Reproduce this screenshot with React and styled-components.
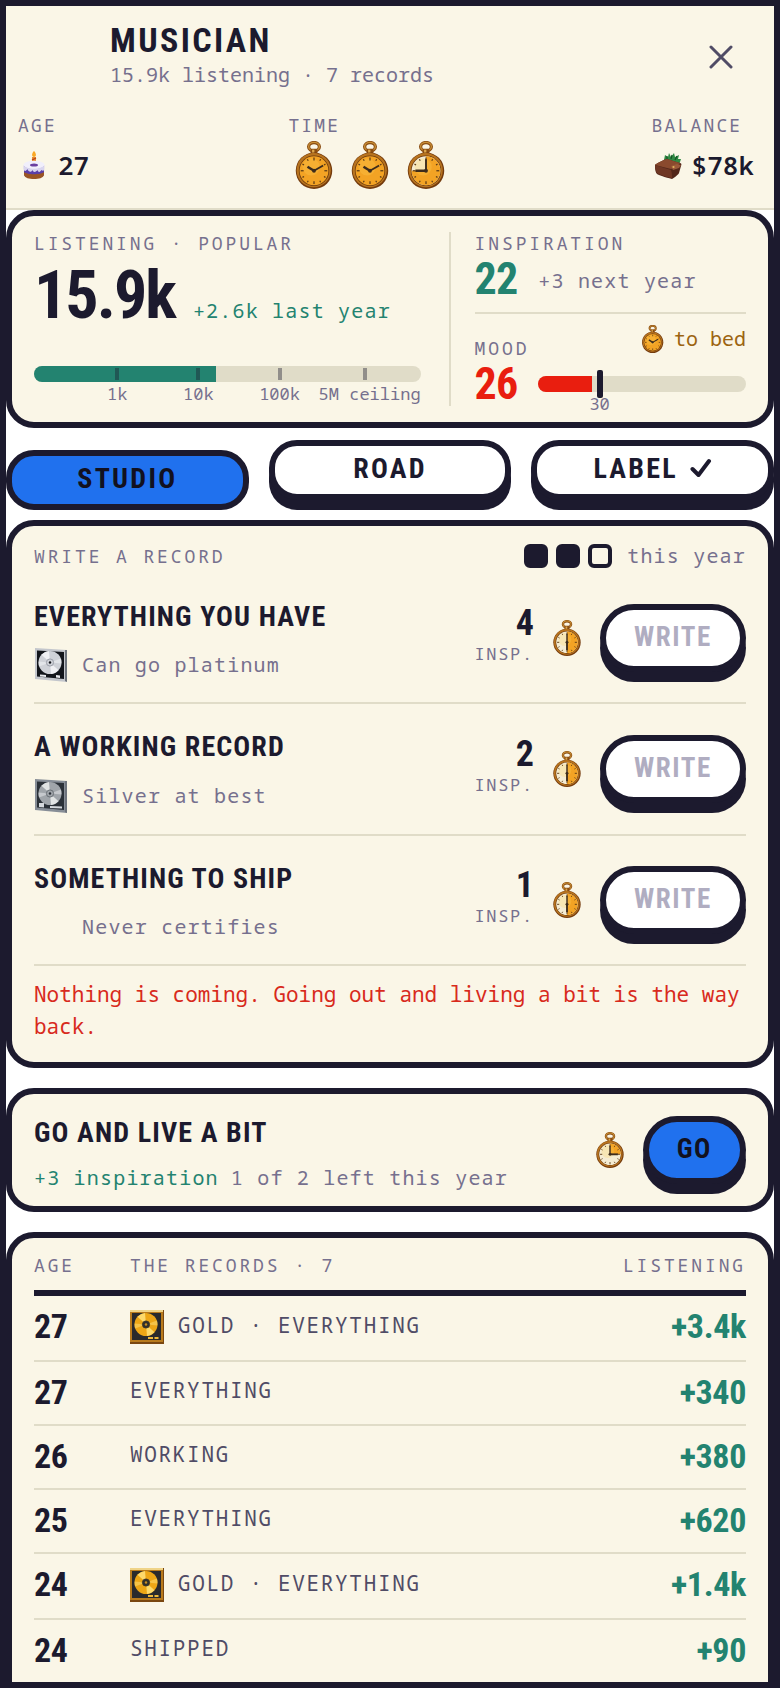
import React from "react";
import styled, { createGlobalStyle } from "styled-components";

const COLORS = {
  ink: "#1c1a2e",
  night: "#121120",
  cream: "#faf6e7",
  sand: "#e0dcc8",
  white: "#ffffff",
  blue: "#2071ee",
  green: "#238370",
  red: "#e91e0f",
  alert: "#d82a1c",
  amber: "#9c6410",
  muted: "#76708e",
  slate: "#504c66",
  disabled: "#b0adc1",
};

const MONO = `"Noto Sans Mono", "DejaVu Sans Mono", monospace`;
const DISPLAY = `"Roboto Condensed", "Roboto", sans-serif`;

const Watches = [
  { id: 1, filled: 1 },
  { id: 2, filled: 1 },
  { id: 3, filled: 0.75 },
];

const Milestones = [
  { name: "1k", at: 21 },
  { name: "10k", at: 42 },
  { name: "100k", at: 63 },
  { name: "5M ceiling", at: 85, last: true },
];

const Slots = [true, true, false];

const Projects = [
  { name: "Everything you have", hint: "Can go platinum", cost: 4, medal: "platinum" },
  { name: "A working record", hint: "Silver at best", cost: 2, medal: "silver" },
  { name: "Something to ship", hint: "Never certifies", cost: 1 },
];

const Records = [
  { age: 27, name: "Gold · Everything", gain: "+3.4k", gold: true },
  { age: 27, name: "Everything", gain: "+340" },
  { age: 26, name: "Working", gain: "+380" },
  { age: 25, name: "Everything", gain: "+620" },
  { age: 24, name: "Gold · Everything", gain: "+1.4k", gold: true },
  { age: 24, name: "Shipped", gain: "+90" },
];

const onCircle = (angle, r) => {
  const a = (angle * Math.PI) / 180;
  return [20 + r * Math.sin(a), 31 - r * Math.cos(a)];
};

// filled: share of the dial, clockwise from twelve, still available
function Stopwatch({ size = 48, filled = 1 }) {
  const [ex, ey] = onCircle(filled * 360, 15);
  const [mx, my] = filled === 1 ? onCircle(60, 11) : onCircle(0, 12);
  const [hx, hy] = filled === 1 ? onCircle(302, 8) : onCircle(filled * 360, 11);
  return (
    <svg width={(size * 5) / 6} height={size} viewBox="0 0 40 50" aria-hidden="true">
      <ellipse cx="20" cy="6" rx="5.6" ry="4.4" fill="none" stroke="#8a4d12" strokeWidth="3.4" />
      <ellipse cx="20" cy="5.8" rx="5.6" ry="4.4" fill="none" stroke="#c98f36" strokeWidth="1.4" />
      <rect x="16.5" y="8" width="7" height="6" rx="1" fill="#8a4d12" />
      <rect x="18" y="9" width="2.4" height="4" fill="#dca64a" />
      <circle cx="20" cy="31" r="19" fill="#743b0d" />
      <circle cx="19.7" cy="30.4" r="17.8" fill="#b8741f" />
      <circle cx="20" cy="31" r="15.8" fill="#6b390e" />
      <circle cx="20" cy="31" r="15" fill={filled === 1 ? "#f3a324" : "#f5ecd2"} />
      {filled < 1 && (
        <path
          d={`M20 31V16A15 15 0 ${filled > 0.5 ? 1 : 0} 1 ${ex} ${ey}Z`}
          fill="#f3a324"
        />
      )}
      <circle cx="17" cy="27" r="9" fill="#ffd35c" opacity="0.25" />
      {[0, 30, 60, 90, 120, 150, 180, 210, 240, 270, 300, 330].map((a) => {
        const [x1, y1] = onCircle(a, 13.8);
        const [x2, y2] = onCircle(a, a % 90 === 0 ? 10.8 : 12);
        return (
          <line key={a} x1={x1} y1={y1} x2={x2} y2={y2} stroke="#5b3a16" strokeWidth="1.3" />
        );
      })}
      <line x1="20" y1="31" x2={mx} y2={my} stroke="#3d2c1c" strokeWidth="2" />
      <line x1="20" y1="31" x2={hx} y2={hy} stroke="#3d2c1c" strokeWidth="2.6" />
      <circle cx="20" cy="31" r="2" fill="#3d2c1c" />
    </svg>
  );
}

function Cake() {
  return (
    <svg width="32" height="32" viewBox="0 0 32 32" aria-hidden="true">
      <rect x="14" y="8" width="4" height="10" fill="#e8892b" />
      <path d="M14 11l4-2M14 15l4-2" stroke="#b8431c" strokeWidth="1.2" />
      <path d="M16 2c3 3 2 6 0 6s-3-3 0-6z" fill="#f9a825" />
      <path d="M6 17v8c0 3 4 4 10 4s10-1 10-4v-8z" fill="#5a3fa8" />
      <path d="M6 23v3c1 3 5 4 10 4s9-1 10-4v-3c-3 3-17 3-20 0z" fill="#9a5524" />
      <ellipse cx="16" cy="16" rx="10.6" ry="4.2" fill="#f1effb" />
      <path
        d="M5.4 16v4c1 3 3 2 4 0 1 3 4 4 5 1 1 3 4 2 5 0 1 3 3 2 4 0 1 1 3 1 3-1v-4c-3 5-18 5-21 0z"
        fill="#d9d5ef"
      />
      <ellipse cx="16" cy="16" rx="4" ry="1.6" fill="#6a3fa0" />
    </svg>
  );
}

function Wallet() {
  return (
    <svg width="32" height="32" viewBox="0 0 32 32" aria-hidden="true">
      <path d="M12 11l1-5 3 2 1-4 2 4 3-4 1 4 4-2-1 4 3 0-2 6-8 2z" fill="#2f8a43" />
      <path d="M15 10l0-3M19 10l1-4M23 11l2-4" stroke="#155526" strokeWidth="1.2" />
      <path d="M3 16c0-1 10-6 12-6l13 4c1 0 2 1 1 3l-2 7c0 1-5 5-7 6-1 0-14-4-15-5-2-2-2-7-2-9z" fill="#52271a" />
      <path d="M3 16c0-1 10-6 12-6l13 4c0 1-7 6-9 6z" fill="#8a4a2e" />
      <path d="M3 16l16 5c1 3 1 6 1 8-3 0-14-4-15-5-1-1-2-6-2-8z" fill="#6f3724" />
      <path d="M19 17l6-2 4 1-2 3-6 2z" fill="#9a5a3a" />
      <circle cx="21.5" cy="18" r="1.1" fill="#e0b25a" />
    </svg>
  );
}

const MEDALS = {
  platinum: { frame: "#c3c6cc", back: "#12151b", disc: "#cfd2d8", shine: "#f6f7f9", hub: "#8f939e" },
  silver: { frame: "#878e97", back: "#2b3138", disc: "#a0a5aa", shine: "#eceeef", hub: "#5d6369" },
  gold: { frame: "#b87a1c", back: "#2a2a2c", disc: "#eda616", shine: "#ffe27a", hub: "#33302a" },
};

function Medal({ kind }) {
  const m = MEDALS[kind];
  return (
    <svg width="34" height="34" viewBox="0 0 34 34" aria-hidden="true">
      {kind === "gold" ? (
        <>
          <rect width="34" height="34" fill="#7a4710" />
          <rect width="33" height="32" fill={m.frame} />
          <rect width="33" height="2" fill="#f0d488" />
          <rect x="2" y="3" width="29" height="27" fill={m.back} />
        </>
      ) : (
        <>
          <path d="M1 0l32 2v32L1 31z" fill={m.frame} />
          <path d="M31 2l2 0v32l-2-1z" fill="#6d737c" />
          <path d="M3 2.5l27 1.5v27L3 28.5z" fill={m.back} />
        </>
      )}
      <circle cx="16" cy="14.5" r="11.5" fill={m.disc} />
      <path
        d="M16 14.5L7.5 6.8A11.5 11.5 0 0 1 15 3zM16 14.500L24.500 22.200A11.500 11.500 0 0 1 17 26z"
        fill={m.shine}
        opacity="0.85"
      />
      <path d="M16 14.5l11-4a11.5 11.5 0 0 1 .5 5zM16 14.5l-11 4a11.5 11.5 0 0 1-.5-5z" fill={m.shine} opacity="0.5" />
      <circle cx="16" cy="14.5" r="3.6" fill={kind === "gold" ? m.hub : m.disc} stroke={m.hub} strokeWidth="0.8" />
      <circle cx="16" cy="14.5" r="1.2" fill={kind === "gold" ? "#c98d20" : m.back} />
      {kind === "gold" && <path d="M18 27h5v2h-5zM24.5 27h4v2h-4z" fill="#f0b93a" />}
      {kind === "platinum" && <path d="M6 26.5l6 .5v2l-6-.5zM22 27l4 .5v2.500l-4-.5z" fill="#e8eaee" />}
      {kind === "silver" && <path d="M5 24h5v4.5l-5-.5zM16 27l12 .5v2l-12-.5z" fill="#d5d9dd" />}
    </svg>
  );
}

function App() {
  return (
    <>
      <GlobalStyle />
      <Frame>
        <Header>
          <TitleRow>
            <div className="names">
              <h1>Musician</h1>
              <p>15.9k listening · 7 records</p>
            </div>
            <CloseButton aria-label="Close">
              <svg width="24" height="24" viewBox="0 0 24 24" aria-hidden="true">
                <path d="M2 2l20 20M22 2L2 22" stroke={COLORS.slate} strokeWidth="3" strokeLinecap="round" />
              </svg>
            </CloseButton>
          </TitleRow>
          <Stats>
            <div>
              <StatLabel>Age</StatLabel>
              <StatValue>
                <Cake />
                27
              </StatValue>
            </div>
            <div>
              <StatLabel>Time</StatLabel>
              <WatchRow>
                {Watches.map((w) => (
                  <span key={w.id}>
                    <Stopwatch filled={w.filled} />
                  </span>
                ))}
              </WatchRow>
            </div>
            <div>
              <StatLabel>Balance</StatLabel>
              <StatValue>
                <Wallet />
                $78k
              </StatValue>
            </div>
          </Stats>
        </Header>

        <Overview>
          <Listening>
            <Label>Listening · Popular</Label>
            <div className="total">
              <strong>15.9k</strong>
              <Note $color={COLORS.green}>+2.6k last year</Note>
            </div>
            <Scale>
              <Track>
                <Fill $color={COLORS.green} style={{ width: "47%" }} />
                {Milestones.map((m) => (
                  <Tick key={m.name} style={{ left: `${m.at}%` }} />
                ))}
              </Track>
              <div className="marks">
                {Milestones.map((m) => (
                  <Mark key={m.name} $last={m.last} style={m.last ? undefined : { left: `${m.at}%` }}>
                    {m.name}
                  </Mark>
                ))}
              </div>
            </Scale>
          </Listening>
          <Vitals>
            <div className="inspiration">
              <Label>Inspiration</Label>
              <VitalRow>
                <Vital $color={COLORS.green}>22</Vital>
                <Note>+3 next year</Note>
              </VitalRow>
            </div>
            <div className="mood">
              <div className="top">
                <Label>Mood</Label>
                <span className="bed">
                  <Stopwatch size={28} />
                  to bed
                </span>
              </div>
              <VitalRow>
                <Vital $color={COLORS.red}>26</Vital>
                <Track>
                  <Fill $color={COLORS.red} style={{ width: "26%" }} />
                  <Threshold style={{ left: "30%" }}>
                    <span>30</span>
                  </Threshold>
                </Track>
              </VitalRow>
            </div>
          </Vitals>
        </Overview>

        <Tabs>
          <Tab $active>Studio</Tab>
          <Tab>Road</Tab>
          <Tab>
            Label
            <svg width="22" height="20" viewBox="0 0 22 20" aria-hidden="true">
              <path
                d="M2.5 11l6 6L19 3"
                fill="none"
                stroke={COLORS.ink}
                strokeWidth="4"
                strokeLinecap="round"
                strokeLinejoin="round"
              />
            </svg>
          </Tab>
        </Tabs>

        <Card>
          <CardHead>
            <Label>Write a record</Label>
            <div className="slots">
              {Slots.map((used, index) => (
                <Slot key={index} $used={used} />
              ))}
              <Note>this year</Note>
            </div>
          </CardHead>
          {Projects.map((p) => (
            <Project key={p.name}>
              <div className="text">
                <h2>{p.name}</h2>
                <Hint $large={p.medal === "silver"}>
                  <span className="medal">{p.medal && <Medal kind={p.medal} />}</span>
                  <Note>{p.hint}</Note>
                </Hint>
              </div>
              <Cost>
                <strong>{p.cost}</strong>
                <span>Insp.</span>
              </Cost>
              <Stopwatch size={36} filled={0.5} />
              <PillButton disabled>Write</PillButton>
            </Project>
          ))}
          <Warning>Nothing is coming. Going out and living a bit is the way back.</Warning>
        </Card>

        <Card>
          <Outing>
            <div className="text">
              <h2>Go and live a bit</h2>
              <p>
                <Note $color={COLORS.green}>+3 inspiration</Note> <Note>1 of 2 left this year</Note>
              </p>
            </div>
            <Stopwatch size={36} filled={0.25} />
            <PillButton $primary>Go</PillButton>
          </Outing>
        </Card>

        <RecordsCard>
          <RecordTable>
            <thead>
              <tr>
                <th className="age">Age</th>
                <th>The records · 7</th>
                <th className="gain">Listening</th>
              </tr>
            </thead>
            <tbody>
              {Records.map((r, index) => (
                <tr key={index}>
                  <td className="age">{r.age}</td>
                  <td>
                    <RecordName>
                      {r.gold && <Medal kind="gold" />}
                      <span>{r.name}</span>
                    </RecordName>
                  </td>
                  <td className="gain">{r.gain}</td>
                </tr>
              ))}
            </tbody>
          </RecordTable>
        </RecordsCard>
      </Frame>
    </>
  );
}

const GlobalStyle = createGlobalStyle`
  * {
    box-sizing: border-box;
  }
  body {
    margin: 0;
    background: ${COLORS.white};
    color: ${COLORS.ink};
    font-family: ${MONO};
  }
  h1, h2, p {
    margin: 0;
  }
  svg {
    display: block;
    flex-shrink: 0;
  }
`;

const Frame = styled.main`
  height: 100vh;
  border: 6px solid ${COLORS.ink};
  overflow-x: hidden;
  overflow-y: auto;
  scrollbar-width: none;
`;

const Label = styled.div`
  font-size: 18px;
  line-height: 22px;
  letter-spacing: 0.16em;
  text-transform: uppercase;
  color: ${COLORS.muted};
`;

const StatLabel = styled(Label)`
  line-height: 24px;
  letter-spacing: 0.12em;
`;

const Note = styled.span`
  font-size: 20px;
  line-height: 28px;
  letter-spacing: 0.06em;
  color: ${(p) => p.$color || COLORS.muted};
`;

const Header = styled.header`
  padding: 14px 20px 15px 12px;
  background: ${COLORS.cream};
  border-bottom: 2px solid ${COLORS.sand};
`;

const TitleRow = styled.div`
  display: flex;
  justify-content: space-between;
  min-height: 74px;
  margin-bottom: 19px;
  padding-left: 92px;
  h1 {
    font-family: ${DISPLAY};
    font-size: 34px;
    line-height: 40px;
    font-weight: 700;
    letter-spacing: 0.07em;
    text-transform: uppercase;
  }
  p {
    font-size: 20px;
    line-height: 29px;
    color: ${COLORS.muted};
  }
`;

const CloseButton = styled.button`
  display: flex;
  align-items: center;
  justify-content: center;
  width: 66px;
  padding: 0;
  border: none;
  background: transparent;
  cursor: pointer;
`;

const Stats = styled.div`
  display: flex;
  justify-content: space-between;
`;

const StatValue = styled.div`
  display: flex;
  align-items: center;
  gap: 8px;
  height: 56px;
  font-size: 26px;
  font-weight: 600;
`;

const WatchRow = styled.div`
  display: flex;
  align-items: center;
  gap: 4px;
  height: 56px;
  span {
    display: flex;
    justify-content: center;
    width: 52px;
  }
`;

const Card = styled.section`
  margin-bottom: 20px;
  padding: 0 22px;
  border: 6px solid ${COLORS.ink};
  border-radius: 28px;
  background: ${COLORS.cream};
  h2 {
    font-family: ${DISPLAY};
    font-size: 28px;
    line-height: 32px;
    font-weight: 700;
    letter-spacing: 0.04em;
    text-transform: uppercase;
  }
`;

const RecordsCard = styled(Card)`
  padding-bottom: 24px;
`;

const Overview = styled(Card)`
  display: grid;
  grid-template-columns: 1.3fr 1fr;
  column-gap: 28px;
  margin-bottom: 12px;
  padding: 16px 22px;
`;

const Listening = styled.div`
  display: flex;
  flex-direction: column;
  .total {
    display: flex;
    align-items: baseline;
    gap: 18px;
    margin-top: 8px;
    strong {
      font-family: ${DISPLAY};
      font-size: 66px;
      line-height: 68px;
      font-weight: 700;
      letter-spacing: -0.03em;
    }
  }
`;

const Scale = styled.div`
  margin-top: auto;
  .marks {
    position: relative;
    height: 24px;
  }
`;

const Track = styled.div`
  position: relative;
  flex: 1;
  height: 16px;
  border-radius: 8px;
  background: ${COLORS.sand};
`;

const Fill = styled.div`
  height: 100%;
  border-radius: 8px 0 0 8px;
  background: ${(p) => p.$color};
`;

const Tick = styled.i`
  position: absolute;
  top: 2px;
  width: 4px;
  height: 12px;
  background: ${COLORS.ink};
  opacity: 0.4;
`;

const Mark = styled.span`
  position: absolute;
  ${(p) => (p.$last ? "right: 0;" : "transform: translateX(-50%);")}
  margin-left: 2px;
  font-size: 17px;
  line-height: 24px;
  white-space: nowrap;
  color: ${COLORS.muted};
`;

const Threshold = styled.i`
  position: absolute;
  top: -6px;
  width: 6px;
  height: 28px;
  margin-left: -4px;
  border-radius: 2px;
  background: ${COLORS.ink};
  span {
    position: absolute;
    top: 24px;
    left: 50%;
    transform: translateX(-50%);
    font-size: 17px;
    line-height: 20px;
    font-style: normal;
    color: ${COLORS.muted};
  }
`;

const Vitals = styled.div`
  padding-left: 24px;
  border-left: 2px solid ${COLORS.sand};
  .inspiration {
    padding-bottom: 12px;
    border-bottom: 2px solid ${COLORS.sand};
    ${Note} {
      padding-top: 4px;
    }
  }
  .mood {
    padding: 10px 0 1px;
    .top {
      display: flex;
      align-items: flex-end;
      justify-content: space-between;
      height: 35px;
    }
    .bed {
      display: flex;
      align-items: center;
      align-self: flex-start;
      gap: 10px;
      font-size: 20px;
      line-height: 30px;
      color: ${COLORS.amber};
    }
  }
`;

const VitalRow = styled.div`
  display: flex;
  align-items: center;
  gap: 21px;
  margin-top: 4px;
  height: 42px;
`;

const Vital = styled.strong`
  font-family: ${DISPLAY};
  font-size: 44px;
  line-height: 42px;
  font-weight: 700;
  letter-spacing: -0.02em;
  color: ${(p) => p.$color};
`;

const Tabs = styled.nav`
  display: grid;
  grid-template-columns: repeat(3, 1fr);
  column-gap: 20px;
  margin-bottom: 10px;
  padding-bottom: 10px;
`;

const Tab = styled.button`
  display: flex;
  align-items: center;
  justify-content: center;
  gap: 12px;
  height: 60px;
  padding: 0 0 4px;
  border: 6px solid ${COLORS.ink};
  border-radius: 28px;
  background: ${(p) => (p.$active ? COLORS.blue : COLORS.white)};
  box-shadow: ${(p) => (p.$active ? "none" : `0 10px 0 ${COLORS.ink}`)};
  transform: ${(p) => (p.$active ? "translateY(10px)" : "none")};
  color: ${(p) => (p.$active ? COLORS.night : COLORS.ink)};
  font-family: ${DISPLAY};
  font-size: 28px;
  font-weight: 700;
  letter-spacing: 0.08em;
  text-transform: uppercase;
  cursor: pointer;
`;

const PillButton = styled.button`
  height: 68px;
  padding: 0 28px 2px;
  border: 6px solid ${COLORS.ink};
  border-radius: 34px;
  background: ${(p) => (p.$primary ? COLORS.blue : COLORS.white)};
  box-shadow: 0 10px 0 ${COLORS.ink};
  color: ${COLORS.night};
  font-family: ${DISPLAY};
  font-size: 27px;
  font-weight: 700;
  letter-spacing: 0.06em;
  text-transform: uppercase;
  cursor: pointer;
  &:disabled {
    color: ${COLORS.disabled};
    cursor: default;
  }
`;

const CardHead = styled.div`
  display: flex;
  align-items: center;
  justify-content: space-between;
  height: 24px;
  margin: 18px 0 6px;
  .slots {
    display: flex;
    align-items: center;
    gap: 8px;
  }
  ${Note} {
    padding-left: 7px;
  }
`;

const Slot = styled.i`
  width: 24px;
  height: 24px;
  border: 4px solid ${COLORS.ink};
  border-radius: 6px;
  background: ${(p) => (p.$used ? COLORS.ink : "transparent")};
`;

const Project = styled.div`
  display: flex;
  align-items: center;
  gap: 18px;
  border-bottom: 2px solid ${COLORS.sand};
  .text {
    flex: 1;
    padding: 27px 0 13px;
  }
`;

const Hint = styled.div`
  display: flex;
  align-items: center;
  gap: 14px;
  height: ${(p) => (p.$large ? 50 : 48)}px;
  margin-top: 8px;
  .medal {
    width: 34px;
  }
`;

const Cost = styled.div`
  text-align: right;
  strong {
    display: block;
    font-family: ${DISPLAY};
    font-size: 36px;
    line-height: 32px;
    font-weight: 700;
  }
  span {
    display: block;
    font-size: 17px;
    line-height: 30px;
    letter-spacing: 0.1em;
    text-transform: uppercase;
    color: ${COLORS.muted};
  }
`;

const Warning = styled.p`
  padding: 12px 0 20px;
  font-size: 21px;
  line-height: 32px;
  color: ${COLORS.alert};
`;

const Outing = styled.div`
  display: flex;
  align-items: flex-start;
  gap: 18px;
  padding: 22px 0 13px;
  .text {
    flex: 1;
    padding-top: 1px;
    p {
      margin-top: 14px;
      font-size: 20px;
      line-height: 30px;
    }
  }
  > svg {
    margin-top: 16px;
  }
`;

const RecordTable = styled.table`
  width: 100%;
  border-spacing: 0;
  th {
    padding: 16px 0 14px;
    border-bottom: 6px solid ${COLORS.ink};
    font-size: 18px;
    line-height: 22px;
    font-weight: 400;
    letter-spacing: 0.16em;
    text-align: left;
    text-transform: uppercase;
    color: ${COLORS.muted};
  }
  td {
    padding: 14px 0 16px;
    border-bottom: 2px solid ${COLORS.sand};
    font-family: ${DISPLAY};
    font-size: 34px;
    line-height: 32px;
    font-weight: 700;
    letter-spacing: -0.01em;
    vertical-align: top;
  }
  .age {
    width: 96px;
  }
  td.gain {
    color: ${COLORS.green};
  }
  .gain {
    text-align: right;
  }
`;

const RecordName = styled.div`
  display: flex;
  align-items: center;
  gap: 14px;
  font-family: ${MONO};
  font-size: 21px;
  line-height: 28px;
  font-weight: 400;
  letter-spacing: 0.08em;
  text-transform: uppercase;
  color: ${COLORS.slate};
  span {
    padding-bottom: 4px;
  }
`;

export default App;
